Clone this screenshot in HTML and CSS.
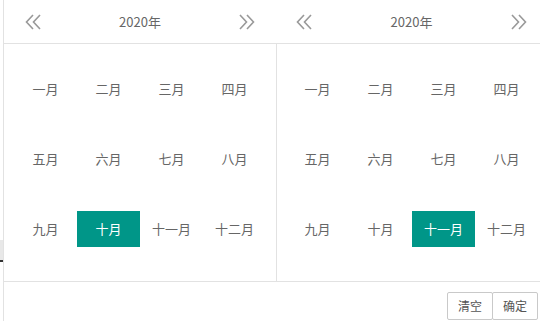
FILE: index.html
```html
<!DOCTYPE html>
<html lang="zh-CN">
<head>
<meta charset="UTF-8">
<meta name="viewport" content="width=device-width, initial-scale=1.0">
<title>年月范围选择</title>
<link rel="stylesheet" href="styles.css">
</head>
<body>
<div class="page">
    <div class="stub"><span class="stub-tag"></span></div>
    <div class="laydate">
        <div class="panels">
            <div class="panel">
                <div class="head">
                    <span class="arrow"><svg width="17" height="16" viewBox="0 0 17 16"><path d="M8 1 L1.5 8 L8 15 M15 1 L8.5 8 L15 15" fill="none" stroke="#999" stroke-width="1.6"/></svg></span>
                    <span class="year">2020年</span>
                    <span class="arrow"><svg width="17" height="16" viewBox="0 0 17 16"><path d="M2 1 L8.5 8 L2 15 M9 1 L15.5 8 L9 15" fill="none" stroke="#999" stroke-width="1.6"/></svg></span>
                </div>
                <div class="body">
                    <div class="months">
                        <span class="month">一月</span><span class="month">二月</span><span class="month">三月</span><span class="month">四月</span>
                        <span class="month">五月</span><span class="month">六月</span><span class="month">七月</span><span class="month">八月</span>
                        <span class="month">九月</span><span class="month selected">十月</span><span class="month">十一月</span><span class="month">十二月</span>
                    </div>
                </div>
            </div>
            <div class="panel panel-right">
                <div class="head">
                    <span class="arrow"><svg width="17" height="16" viewBox="0 0 17 16"><path d="M8 1 L1.5 8 L8 15 M15 1 L8.5 8 L15 15" fill="none" stroke="#999" stroke-width="1.6"/></svg></span>
                    <span class="year">2020年</span>
                    <span class="arrow"><svg width="17" height="16" viewBox="0 0 17 16"><path d="M2 1 L8.5 8 L2 15 M9 1 L15.5 8 L9 15" fill="none" stroke="#999" stroke-width="1.6"/></svg></span>
                </div>
                <div class="body">
                    <div class="months">
                        <span class="month">一月</span><span class="month">二月</span><span class="month">三月</span><span class="month">四月</span>
                        <span class="month">五月</span><span class="month">六月</span><span class="month">七月</span><span class="month">八月</span>
                        <span class="month">九月</span><span class="month">十月</span><span class="month selected">十一月</span><span class="month">十二月</span>
                    </div>
                </div>
            </div>
        </div>
        <div class="footer">
            <button class="btn">清空</button>
            <button class="btn btn-last">确定</button>
        </div>
    </div>
    <div class="watermark wm-1">中信证券</div>
    <div class="watermark wm-2">86.12.66.1F</div>
</div>
</body>
</html>
```
FILE: styles.css
```css
html, body {
    margin: 0;
    padding: 0;
    background: #fff;
    overflow: hidden;
}
body {
    font-family: "Noto Sans CJK SC", "Noto Sans", sans-serif;
    font-size: 13px;
    color: #666;
}
.page {
    position: relative;
    display: flex;
    width: 540px;
    height: 321px;
    overflow: hidden;
}
.stub {
    width: 3px;
    flex: none;
    padding-top: 240px;
    overflow: hidden;
}
.stub-tag {
    display: block;
    width: 3px;
    height: 22px;
    background: #e8e8e8;
    border-right: 0;
    box-shadow: inset -1px -6px 0 -4px #333;
}
.laydate {
    flex: none;
    width: 549px;
    border-left: 1px solid #e2e2e2;
}
.panels {
    display: flex;
}
.panel {
    width: 272px;
    flex: none;
}
.head {
    height: 43px;
    border-bottom: 1px solid #e2e2e2;
    display: flex;
    align-items: center;
    justify-content: space-between;
    padding: 0 21px;
}
.panel-right .head {
    padding: 0 21px 0 20px;
}
.arrow {
    display: flex;
    width: 17px;
    height: 16px;
}
.year {
    font-size: 13px;
    color: #666;
}
.body {
    height: 237px;
    box-sizing: border-box;
    padding: 0 10px 0 10px;
}
.panel-right .body {
    border-left: 1px solid #e2e2e2;
    padding-left: 9px;
}
.months {
    display: grid;
    grid-template-columns: repeat(4, 63px);
    grid-auto-rows: 70px;
    padding-top: 10px;
}
.month {
    align-self: center;
    height: 36px;
    line-height: 36px;
    text-align: center;
    color: #666;
}
.month.selected {
    background: #009688;
    color: #fff;
}
.footer {
    border-top: 1px solid #e2e2e2;
    display: flex;
    justify-content: flex-start;
    padding: 10px 0 0 443px;
}
.btn {
    height: 28px;
    padding: 0 10px;
    border: 1px solid #c9c9c9;
    border-radius: 2px;
    background: #fff;
    color: #555;
    font-family: "Noto Sans CJK SC", sans-serif;
    font-size: 12px;
    line-height: 26px;
}
.btn-last {
    margin-left: -1px;
}
.watermark {
    position: absolute;
    color: rgba(0, 0, 0, 0.025);
    font-size: 26px;
    font-weight: bold;
    white-space: nowrap;
    transform: rotate(-50deg);
    pointer-events: none;
}
.wm-1 {
    left: 170px;
    top: 90px;
}
.wm-2 {
    left: 20px;
    top: 230px;
}
```
